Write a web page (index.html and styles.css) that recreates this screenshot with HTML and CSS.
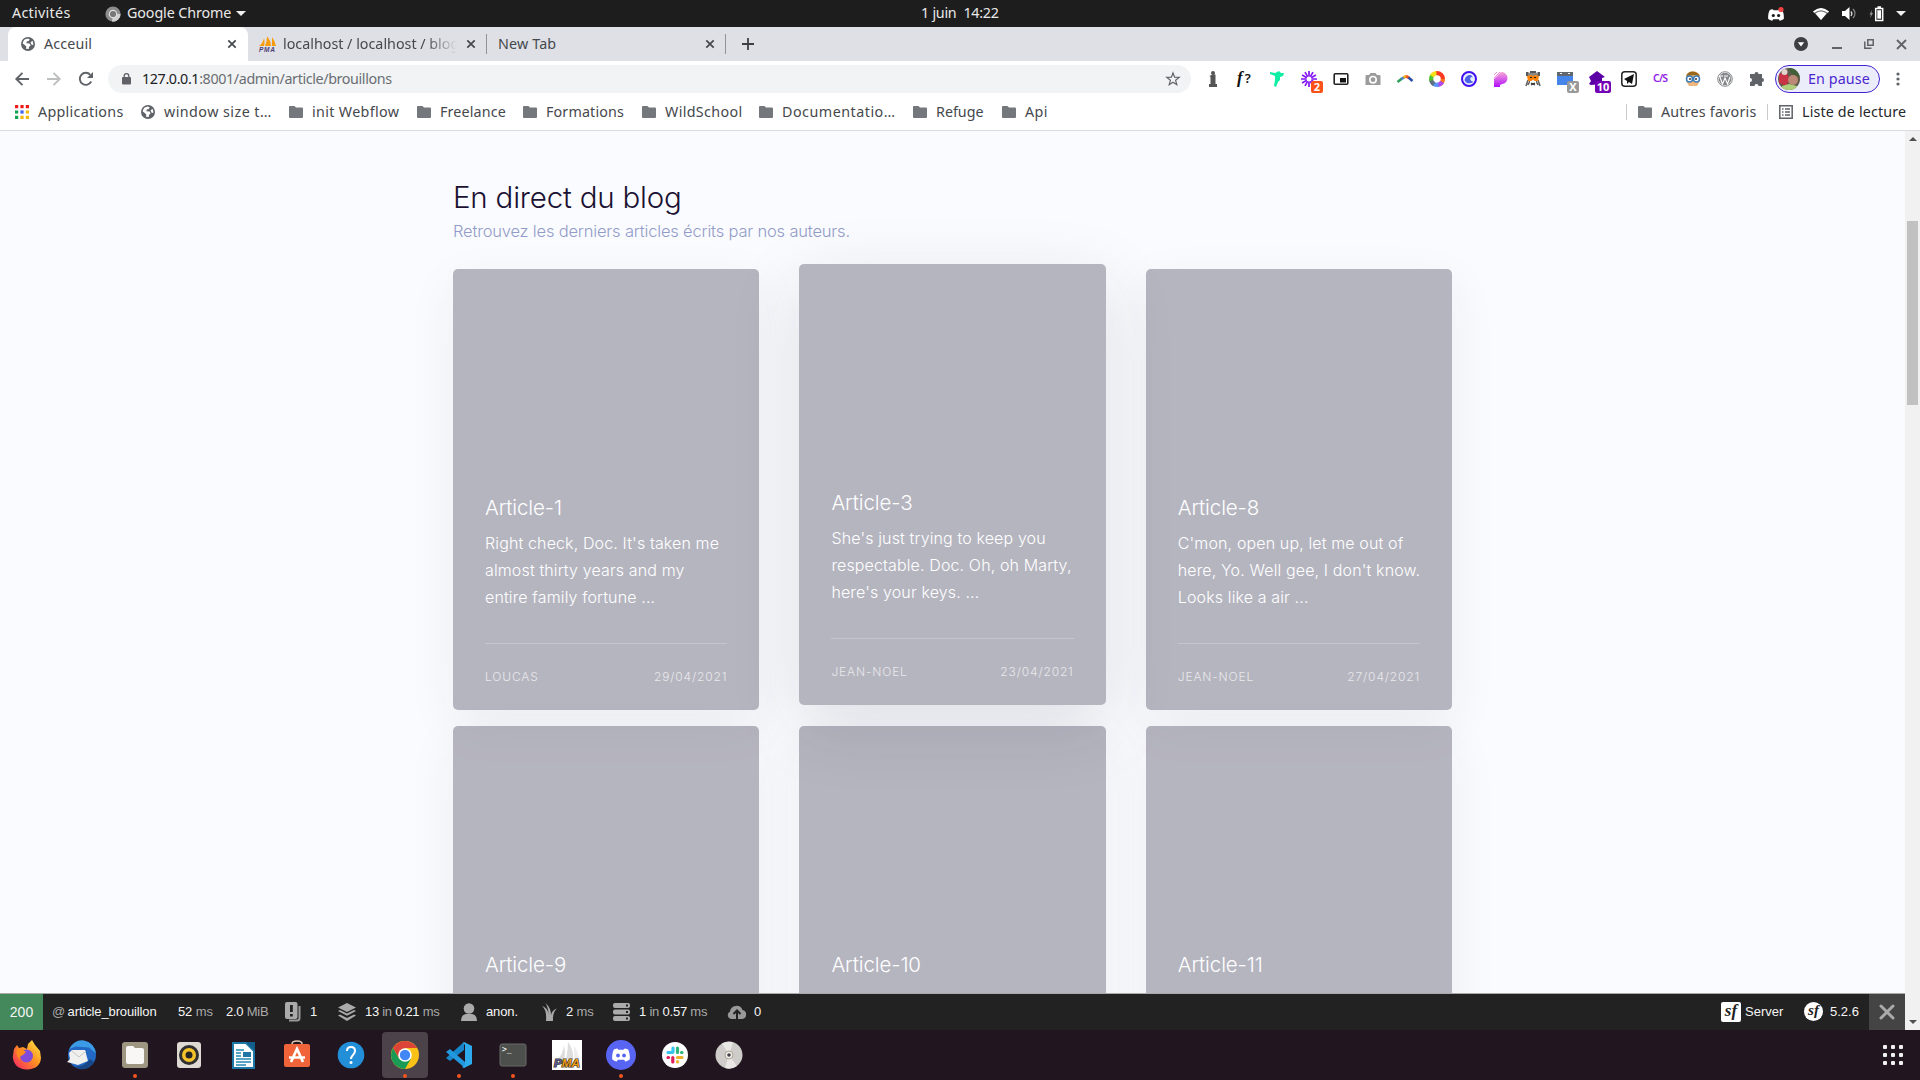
FILE: index.html
```html
<!DOCTYPE html>
<html lang="fr">
<head>
<meta charset="utf-8">
<title>Acceuil</title>
<link rel="stylesheet" href="styles.css">
</head>
<body>
<svg class="defs" aria-hidden="true">
  <symbol id="folder" viewBox="0 0 14 12"><path d="M1 0h4.500l1.500 1.500h6a1 1 0 0 1 1 1V11a1 1 0 0 1-1 1H1a1 1 0 0 1-1-1V1a1 1 0 0 1 1-1z" fill="#74787c"/></symbol>
  <symbol id="globe" viewBox="0 0 14 14"><circle cx="7" cy="7" r="7" fill="#5f6368"/><path d="M1.700 6.500C2 3.500 4 1.700 7 1.600l1.700.8-1 1.700-2 .5-.3 1.700 3.200.2 1 2-1.500 1.300-.4 2.200-2.700-.3.300-2.300-1.800-1.600z" fill="#fff"/><path d="M9.500 5.500l2-1.700 1 3.500-1.500 1z" fill="#fff"/></symbol>
  <symbol id="cross" viewBox="0 0 10 10"><path d="M1.300 1.300l7.400 7.400M8.700 1.300L1.300 8.700" stroke="#44474b" stroke-width="1.700"/></symbol>
  <symbol id="chrome" viewBox="0 0 28 28"><circle cx="14" cy="14" r="14" fill="#fbc116"/><path d="M1.900 7A14 14 0 0 1 26.100 7H14L8 17.500z" fill="#dc4437"/><path d="M1.900 7A14 14 0 0 0 14 28l6-10.500H8z" fill="#199b55"/><circle cx="14" cy="14" r="6.800" fill="#fff"/><circle cx="14" cy="14" r="5.200" fill="#4386f5"/></symbol>
  <symbol id="discord" viewBox="0 0 24 18"><path d="M8 1L6.500.3C5 .6 3.600 1 2.500 1.700 1 4.500 0 8.500.2 14.500c1.700 1.700 4 2.700 6.200 3l1.400-2.200h8.400l1.400 2.200c2.200-.3 4.500-1.300 6.200-3 .2-6-.8-10-2.300-12.800C20.400 1 19 .6 17.500.3L16 1l-.3 1H8.300z" fill="#fff"/></symbol>
  <symbol id="boat" viewBox="0 0 18 10"><path d="M0 9Q4 6 5 1q1 5 0 8zM6 9Q8 5 8-1q4 5 4 10zM13 9V0q3 4 4 9z" fill="#f89c0e"/></symbol>
</svg>

<header class="topbar">
  <span class="activities">Activités</span>
  <svg class="app-icon" viewBox="0 0 16 16"><circle cx="8" cy="8" r="7.600" fill="#8c8c8c"/><path d="M8 8h7.600A7.600 7.600 0 0 1 7 15.600z" fill="#d0d0d0"/><circle cx="8" cy="8" r="3.700" fill="#777" stroke="#ddd" stroke-width="1.200"/></svg>
  <span class="app-name">Google Chrome</span>
  <i class="caret"></i>
  <time class="clock">1 juin&nbsp; 14:22</time>
  <div class="tray">
    <svg width="18" height="16" viewBox="0 0 18 16"><use href="#discord" x="1" y="3" width="16" height="12"/><circle cx="6.300" cy="9.500" r="1.600" fill="#1d1d1d"/><circle cx="11.600" cy="9.500" r="1.600" fill="#1d1d1d"/><circle cx="14" cy="3.500" r="2.600" fill="#f04343"/></svg>
    <svg class="wifi" width="16" height="14" viewBox="0 0 16 14"><path d="M0 4.500Q8-2.500 16 4.500L8 13z" fill="#777"/><path d="M0 4.500Q8-2.500 16 4.500L14.800 5.700Q8 .7 1.200 5.700z" fill="#fff"/><path d="M2.500 6.500Q8 2.500 13.500 6.500L8 13z" fill="#fff"/></svg>
    <svg class="volume" width="16" height="14" viewBox="0 0 16 14"><path d="M0 4h3l4.500-4v13L3 9H0z" fill="#fff"/><path d="M9 4.500q1.700 2 0 4.500" stroke="#ddd" fill="none" stroke-width="1.300"/><path d="M11 2q4 4.500 0 9" stroke="#888" fill="none" stroke-width="1.300"/></svg>
    <svg class="battery" width="15" height="16" viewBox="0 0 15 16"><path d="M3 4L.5 8.500H2L1 12l3-5H2.500z" fill="#999"/><path d="M6.700 2.500h7v12h-7zM8.500 1h3.500" fill="none" stroke="#fff" stroke-width="1.500"/><path d="M8.300 4.200h3.800v8.500H8.300z" fill="#fff"/></svg>
    <i class="caret"></i>
  </div>
</header>

<nav class="tabs">
  <div class="tab active"><svg width="14" height="14"><use href="#globe"/></svg><span class="tab-title">Acceuil</span><svg class="x" width="10" height="10"><use href="#cross"/></svg></div>
  <div class="tab second"><svg width="18" height="16" viewBox="0 0 18 16"><use href="#boat" x="0" y="1" width="18" height="10"/><text x="0" y="15.500" font-family="Liberation Sans, sans-serif" font-size="6.500" font-weight="bold" font-style="italic" textLength="16" fill="#4d3f76">PMA</text></svg><span class="tab-title fade">localhost / localhost / blog</span><svg class="x" width="10" height="10"><use href="#cross"/></svg></div>
  <div class="tab third"><span class="tab-title">New Tab</span><svg class="x" width="10" height="10"><use href="#cross"/></svg></div>
  <svg class="plus" width="12" height="12" viewBox="0 0 12 12"><path d="M6 0v12M0 6h12" stroke="#3c4043" stroke-width="1.800"/></svg>
  <div class="window">
    <svg width="14" height="14" viewBox="0 0 14 14"><circle cx="7" cy="7" r="7" fill="#3c4043"/><path d="M3.800 5.300h6.400L7 9.500z" fill="#fff"/></svg>
    <svg width="10" height="10" viewBox="0 0 10 10"><path d="M0 9h10" stroke="#5f6368" stroke-width="2"/></svg>
    <svg width="10" height="10" viewBox="0 0 10 10"><path d="M3.800.8h5.400v5.400H3.800zM.8 2.500v6.700h6.700" fill="none" stroke="#5f6368" stroke-width="1.500"/></svg>
    <svg width="11" height="11" viewBox="0 0 11 11"><path d="M1 1l9 9M10 1l-9 9" stroke="#5f6368" stroke-width="1.800"/></svg>
  </div>
</nav>

<div class="toolbar">
  <div class="nav-buttons">
    <svg width="14" height="14" viewBox="0 0 14 14"><path d="M14 7H1.500M7.500.8L1.300 7l6.200 6.200" fill="none" stroke="#5f6368" stroke-width="1.900"/></svg>
    <svg width="14" height="14" viewBox="0 0 14 14"><path d="M0 7h12.500M6.500.8L12.700 7l-6.200 6.200" fill="none" stroke="#bcbec0" stroke-width="1.900"/></svg>
    <svg width="14" height="14" viewBox="0 0 14 14"><path d="M12.200 9.500A6 6 0 1 1 11.300 2.800" fill="none" stroke="#5f6368" stroke-width="1.900"/><path d="M14 0v6H8z" fill="#5f6368"/></svg>
  </div>
  <div class="omnibox">
    <svg width="9" height="12" viewBox="0 0 9 12"><rect y="4" width="9" height="7.500" rx="1" fill="#5f6368"/><path d="M2.200 4.500V3a2.300 2.300 0 0 1 4.600 0v1.500" fill="none" stroke="#5f6368" stroke-width="1.300"/></svg>
    <span class="url"><b>127.0.0.1</b>:8001/admin/article/brouillons</span>
    <svg class="star" width="14" height="14" viewBox="0 0 14 14"><path d="M7 1l1.600 4.200 4.600.2-3.600 2.900 1.200 4.400L7 10.200l-3.800 2.500 1.200-4.400L.8 5.400l4.600-.2z" fill="none" stroke="#5f6368" stroke-width="1.200"/></svg>
  </div>
  <div class="extensions">
    <svg viewBox="0 0 16 16"><circle cx="8" cy="2" r="2" fill="#555"/><path d="M4.500 5l3-1.500h3V13H12v3H4v-3h1.500V6z" fill="#555"/></svg>
    <span class="glyph fq"><i>f</i>?</span>
    <svg viewBox="0 0 16 16"><path d="M1 1l5 1 4-2 2 2 3 0-1 3-3 1v3l-2 2-2 5-2-1 1-6V5L1 3z" fill="#10eda5"/></svg>
    <svg viewBox="0 0 22 22" class="badged"><path d="M8 0v16M0 8h16M1.100 4l13.800 8M14.900 4L1.100 12M4 1.100l8 13.800M12 1.100L4 14.900" stroke="#8415f5" stroke-width="1.700"/><circle cx="8" cy="8" r="2.500" fill="#fff"/><rect x="10" y="10" width="12" height="12" rx="2" fill="#fc5217"/><text x="16" y="20" text-anchor="middle" font-family="Open Sans, sans-serif" font-weight="bold" font-size="11" fill="#fff">2</text></svg>
    <svg viewBox="0 0 16 16"><rect x="1.200" y="2.700" width="13.600" height="10.600" rx="1" fill="none" stroke="#222" stroke-width="1.600"/><path d="M7 7h6v4.500H7z" fill="#111"/></svg>
    <svg viewBox="0 0 16 16"><path d="M2 4h2l1.500-2h5L12 4h2q1.500 0 1.500 1v9H.5V5Q.5 4 2 4z" fill="#9b9b9b"/><circle cx="8" cy="8.700" r="3.200" fill="#9b9b9b" stroke="#fff" stroke-width="1.600"/></svg>
    <svg viewBox="0 0 16 16"><path d="M.5 11l4.500-3.500" stroke="#2aa05a" stroke-width="2.600"/><path d="M4 8.200l4-2.400" stroke="#4a86c8" stroke-width="2.600"/><path d="M6.500 6.500L9.500 5" stroke="#eeb41c" stroke-width="3"/><path d="M9 5l3 2" stroke="#ee5824" stroke-width="3"/><path d="M11.500 6.500l4 3.500" stroke="#2949a8" stroke-width="2.400"/></svg>
    <svg viewBox="0 0 16 16" fill="none" stroke-width="4.200"><circle cx="8" cy="8" r="5.900" stroke="#ff7614" pathLength="12" stroke-dasharray="2 10"/><circle cx="8" cy="8" r="5.900" stroke="#ae4bf2" pathLength="12" stroke-dasharray="2 10" stroke-dashoffset="-1"/><circle cx="8" cy="8" r="5.900" stroke="#5795fa" pathLength="12" stroke-dasharray="2 10" stroke-dashoffset="-2.500"/><circle cx="8" cy="8" r="5.900" stroke="#607080" pathLength="12" stroke-dasharray="2 10" stroke-dashoffset="-4"/><circle cx="8" cy="8" r="5.900" stroke="#50c430" pathLength="12" stroke-dasharray="2 10" stroke-dashoffset="-5.500"/><circle cx="8" cy="8" r="5.900" stroke="#f6df19" pathLength="12" stroke-dasharray="2 10" stroke-dashoffset="-7"/><circle cx="8" cy="8" r="5.900" stroke="#fd3b22" pathLength="12" stroke-dasharray="3.200 8.800" stroke-dashoffset="-8.800"/></svg>
    <svg viewBox="0 0 16 16"><circle cx="8" cy="8" r="7" fill="#e8f0ff" stroke="#4310f0" stroke-width="2"/><path d="M3.500 9Q5 3.500 10 4l2 2.500-2-.5Q7.500 9 12.500 11 6 14.500 3.500 9z" fill="#4d61e8"/></svg>
    <svg viewBox="0 0 16 16"><defs><linearGradient id="pk" x2="0" y2="1"><stop stop-color="#f9a8d5"/><stop offset="1" stop-color="#b00cff"/></linearGradient></defs><path d="M1 8L8 1a6 6 0 1 1 1 12l-2 1v2H1z" fill="url(#pk)"/><path d="M1 4l3-3M1 7l6-6" stroke="#f38cda"/></svg>
    <svg viewBox="0 0 16 16"><path d="M3 1l2 1h6l2-1v6H3z" fill="#888"/><path d="M2 1v4M14 1v4M5 1h6" stroke="#222" stroke-width="1.500"/><path d="M3 9l-2 6M13 9l2 6M5 10l-2 4M11 10l2 4" stroke="#666" stroke-width="1.600"/><path d="M5 8h6v7H5z" fill="#fff"/><path d="M2 5l4-1 2 1 2-1 4 1-1 5H9.500L8 8.500 6.500 10H3z" fill="#ff8208"/><path d="M5 6.500h2M9 6.500h2M6 12l4 2M10 12l-4 2" stroke="#222" stroke-width="1.200"/></svg>
    <svg viewBox="0 0 22 22" class="badged"><path d="M0 1h16v4H0z" fill="#62676d"/><path d="M0 5h16v9H0z" fill="#4584e8"/><path d="M3 2h2v1H3zM11 2h2v1h-2z" fill="#fff"/><rect x="10" y="10" width="12" height="12" rx="2" fill="#999"/><text x="16" y="20" text-anchor="middle" font-family="Open Sans, sans-serif" font-weight="bold" font-size="11" fill="#fff">X</text></svg>
    <svg viewBox="0 0 22 22" class="badged"><path d="M8 0l8 6-3 1v6l-11 1-2-1 2-3-2-4z" fill="#5a00a5"/><rect x="6" y="10" width="16" height="12" rx="2" fill="#7202b5"/><text x="14" y="20" text-anchor="middle" font-family="Open Sans, sans-serif" font-weight="bold" font-size="11" fill="#fff">10</text></svg>
    <svg viewBox="0 0 16 16"><rect x=".8" y=".8" width="14.400" height="14.400" rx="3" fill="#fff" stroke="#222" stroke-width="1.500"/><path d="M13 3l-2 10-3-2-2 2v-3L3 8z" fill="#111"/></svg>
    <span class="glyph cs">C/S</span>
    <svg viewBox="0 0 16 16"><path d="M1 6Q2 1 8 .5T15 6v4l-3 5H4l-3-5z" fill="#efb77d"/><path d="M1 5Q3 0 8 .5T15 5l-5-1z" fill="#9a681b"/><circle cx="4.500" cy="8" r="3" fill="#fff" stroke="#3c7dbb" stroke-width="1.500"/><circle cx="11.500" cy="8" r="3" fill="#fff" stroke="#3c7dbb" stroke-width="1.500"/><circle cx="5" cy="8" r="1" fill="#333"/><circle cx="11" cy="8" r="1" fill="#333"/></svg>
    <svg viewBox="0 0 16 16"><circle cx="8" cy="8" r="7.300" fill="#fff" stroke="#85888b"/><circle cx="8" cy="8" r="6.300" fill="#85888b"/><path d="M2.500 5l3 8L8 7l2.500 6 2.500-7M2 5h4M7 5h4" stroke="#fff" stroke-width="1.100" fill="none"/></svg>
    <svg viewBox="0 0 16 16"><path d="M1 3h4.500a2 2 0 1 1 4 0H13v4a2 2 0 1 1 0 4v4H9.500a2 2 0 0 0-4 0H1v-4a2 2 0 0 0 0-4z" fill="#5f6368"/></svg>
  </div>
  <div class="profile">
    <svg width="22" height="22" viewBox="0 0 22 22"><clipPath id="av"><circle cx="11" cy="11" r="11"/></clipPath><g clip-path="url(#av)"><path d="M0 0h22v22H0z" fill="#5d5b4b"/><path d="M10 0h12v9l-8-3z" fill="#426037"/><path d="M1 6l7-2 4 7-4 7-7-3z" fill="#c93346"/><circle cx="6.500" cy="4" r="3" fill="#e4d3cf"/><circle cx="15" cy="12" r="5" fill="#bc8976"/><path d="M4 18l7-2 8 2v4H4z" fill="#b0cf7d"/></g></svg>
    <span>En pause</span>
  </div>
  <svg class="kebab" width="4" height="14" viewBox="0 0 4 14" fill="#5f6368"><circle cx="2" cy="2" r="1.600"/><circle cx="2" cy="7" r="1.600"/><circle cx="2" cy="12" r="1.600"/></svg>
</div>

<div class="bookmarks">
  <div class="bm apps"><svg width="14" height="14" viewBox="0 0 13 13"><path d="M0 0h3v3H0zM5 0h3v3H5zM10 0h3v3h-3z" fill="#ed1c1c"/><path d="M0 5h3v3H0zM0 10h3v3H0z" fill="#12a352"/><path d="M5 5h3v3H5z" fill="#4464f0"/><path d="M10 5h3v3h-3zM5 10h3v3H5zM10 10h3v3h-3z" fill="#f2b90a"/></svg><span>Applications</span></div>
  <div class="bm window-size"><svg width="14" height="14"><use href="#globe"/></svg><span>window size t…</span></div>
  <div class="bm webflow"><svg width="14" height="12"><use href="#folder"/></svg><span>init Webflow</span></div>
  <div class="bm freelance"><svg width="14" height="12"><use href="#folder"/></svg><span>Freelance</span></div>
  <div class="bm formations"><svg width="14" height="12"><use href="#folder"/></svg><span>Formations</span></div>
  <div class="bm wild"><svg width="14" height="12"><use href="#folder"/></svg><span>WildSchool</span></div>
  <div class="bm docs"><svg width="14" height="12"><use href="#folder"/></svg><span>Documentatio…</span></div>
  <div class="bm refuge"><svg width="14" height="12"><use href="#folder"/></svg><span>Refuge</span></div>
  <div class="bm api"><svg width="14" height="12"><use href="#folder"/></svg><span>Api</span></div>
  <div class="bm others"><svg width="14" height="12"><use href="#folder"/></svg><span>Autres favoris</span></div>
  <div class="bm reading"><svg width="14" height="14" viewBox="0 0 14 14"><path d="M.8.8h12.400v12.400H.8z" fill="none" stroke="#5f6368" stroke-width="1.500"/><path d="M3 4h1.500M6 4h5M3 7h1.500M6 7h5M3 10h1.500M6 10h5" stroke="#5f6368" stroke-width="1.500"/></svg><span>Liste de lecture</span></div>
</div>

<div class="viewport">
  <main class="page">
    <h1>En direct du blog</h1>
    <p class="lead">Retrouvez les derniers articles écrits par nos auteurs.</p>
    <section class="cards">
      <article class="card"><h2>Article-1</h2><p>Right check, Doc. It's taken me<br>almost thirty years and my<br>entire family fortune ...</p><footer><span>LOUCAS</span><span>29/04/2021</span></footer></article>
      <article class="card raised"><h2>Article-3</h2><p>She's just trying to keep you<br>respectable. Doc. Oh, oh Marty,<br>here's your keys. ...</p><footer><span>JEAN-NOEL</span><span>23/04/2021</span></footer></article>
      <article class="card"><h2>Article-8</h2><p>C'mon, open up, let me out of<br>here, Yo. Well gee, I don't know.<br>Looks like a air ...</p><footer><span>JEAN-NOEL</span><span>27/04/2021</span></footer></article>
      <article class="card"><h2>Article-9</h2></article>
      <article class="card"><h2>Article-10</h2></article>
      <article class="card"><h2>Article-11</h2></article>
    </section>
  </main>
  <div class="scrollbar"><i class="up"></i><i class="thumb"></i><i class="down"></i></div>
  <div class="debugbar">
    <div class="status">200</div>
    <div class="d route"><em>@</em> article_brouillon</div>
    <div class="d time">52 <em>ms</em></div>
    <div class="d memory">2.0 <em>MiB</em></div>
    <div class="d logs"><svg width="16" height="20" viewBox="0 0 16 20"><path d="M4 18.500h8q2.500 0 2.500-2.500V4" fill="none" stroke="#999" stroke-width="2"/><rect width="12.500" height="17" rx="2" fill="#aaa"/><path d="M5 3h2.800v7H5zM5 12h2.800v2.500H5z" fill="#222"/></svg><span>1</span></div>
    <div class="d cache"><svg width="18" height="18" viewBox="0 0 18 18"><path d="M9 0l9 4.500L9 9 0 4.500zM0 8l2-1 7 3.500L16 7l2 1-9 4.700zM0 12.500l2-1L9 15l7-3.500 2 1L9 18z" fill="#aaa"/></svg><span>13 <em>in</em> 0.21 <em>ms</em></span></div>
    <div class="d user"><svg width="16" height="18" viewBox="0 0 16 18"><circle cx="8" cy="5.500" r="5.300" fill="#aaa"/><path d="M0 18q0-6 5-7h6q5 1 5 7z" fill="#aaa"/></svg><span>anon.</span></div>
    <div class="d twig"><svg width="15" height="18" viewBox="0 0 15 18"><path d="M4 18Q5 7 0 3q6 2 6.800 9Q6 4 3.500 0 9 5 9 12q1-5 6-6.500Q10.500 9 11 18z" fill="#aaa"/></svg><span>2 <em>ms</em></span></div>
    <div class="d db"><svg width="17" height="18" viewBox="0 0 17 18"><rect width="17" height="5" rx="2" fill="#aaa"/><rect y="6.500" width="17" height="5" rx="2" fill="#aaa"/><rect y="13" width="17" height="5" rx="2" fill="#aaa"/><path d="M13 2.500h2M13 9h2M13 15.500h2" stroke="#222" stroke-width="2"/></svg><span>1 <em>in</em> 0.57 <em>ms</em></span></div>
    <div class="d ajax"><svg width="20" height="14" viewBox="0 0 20 14"><path d="M4 14a4 4 0 0 1-1-7.500A6.500 6.500 0 0 1 15.500 5 4.600 4.600 0 0 1 15.500 14z" fill="#999"/><path d="M10 14V6M6.500 9L10 5.500 13.500 9" stroke="#222" stroke-width="2" fill="none"/></svg><span>0</span></div>
    <div class="d server"><span class="sf square">sf</span><span>Server</span></div>
    <div class="d version"><span class="sf round">sf</span><span>5.2.6</span></div>
    <div class="hide"><svg width="16" height="16" viewBox="0 0 16 16"><path d="M2 2l12 12M14 2L2 14" stroke="#aaa" stroke-width="3" stroke-linecap="round"/></svg></div>
  </div>
</div>

<footer class="dock">
  <div class="launcher"><svg viewBox="0 0 30 30"><defs><linearGradient id="ff" x1="1" x2="0" y2="1"><stop stop-color="#fff04a"/><stop offset=".45" stop-color="#ff9420"/><stop offset="1" stop-color="#f51c68"/></linearGradient></defs><path d="M2 9l3-4 2 3 4-1 4 2 1-5 4-4 3 5 5 6 1 7q-1 11-14 11.500Q2 29 .8 17z" fill="url(#ff)"/><circle cx="14.500" cy="16" r="6.500" fill="#804bd8"/><path d="M5 9q5-1 9 3l-3 3q-4 1-3 5-5-5-3-11z" fill="#ff8a1e"/></svg></div>
  <div class="launcher"><svg viewBox="0 0 30 30"><circle cx="16" cy="15" r="14" fill="#2268c4"/><path d="M3 9Q9-1 18 .5q10 2 12 13l-7-6-13-1z" fill="#3b9be6"/><path d="M3 13l3-3 13 0 3 11-10 4-11-3 3-3z" fill="#f0f0ef"/><path d="M6 11l7 6 7-6" stroke="#c5c5c5" fill="none"/><path d="M4 25q11 5 20-6l4 3q-6 9-15 7z" fill="#174788"/></svg></div>
  <div class="launcher running"><svg viewBox="0 0 30 30"><rect x="2" y="2" width="26" height="26" rx="3" fill="#9e9681"/><path d="M6 8q0-2 2-2h5l2 2h7q2 0 2 2v12q0 2-2 2H8q-2 0-2-2z" fill="#f8f7f5"/></svg></div>
  <div class="launcher"><svg viewBox="0 0 30 30"><rect x="3" y="2" width="24" height="26" rx="3" fill="#dedad3"/><circle cx="15" cy="15" r="10" fill="#303030"/><circle cx="15" cy="15" r="7" fill="#f3c329"/><circle cx="15" cy="15" r="3.500" fill="#252525"/></svg></div>
  <div class="launcher"><svg viewBox="0 0 30 30"><path d="M5 3h13l8 8v17H5z" fill="#fff" stroke="#1c78a6" stroke-width="2"/><path d="M18 2h9v9z" fill="#125f8e"/><path d="M8 10h8M8 13h5M8 16h5M8 19h15M8 22h15M8 25h10" stroke="#2586b3" stroke-width="1.400"/><path d="M15 12h8v5h-8z" fill="#2077a5"/></svg></div>
  <div class="launcher"><svg viewBox="0 0 30 30"><path d="M10 7V4q0-3 5-3t5 3v3" fill="none" stroke="#dec8b0" stroke-width="1.500"/><rect x="2" y="4" width="26" height="23" rx="2" fill="#f16439"/><path d="M9 22l6-13 6 13M7 17.500h16" fill="none" stroke="#fff" stroke-width="2.700"/></svg></div>
  <div class="launcher"><svg viewBox="0 0 30 30"><circle cx="15" cy="15" r="13.300" fill="#238fd8"/><path d="M11 11q0-4 4-4t4 4q0 2-2 4t-2 4" stroke="#fff" stroke-width="2" fill="none"/><circle cx="15" cy="22.500" r="1.500" fill="#fff"/></svg></div>
  <div class="launcher running focused"><svg viewBox="0 0 30 30"><use href="#chrome" x="1" y="1" width="28" height="28"/></svg></div>
  <div class="launcher running"><svg viewBox="0 0 30 30"><path d="M20 2v8L6 21l-4-3z" fill="#1787cc"/><path d="M2 12l4-3 15 13v6z" fill="#2298df"/><path d="M20 2l8 4v18l-8 4-2-1 3-2V5l-2-2z" fill="#2dabed"/></svg></div>
  <div class="launcher running"><svg viewBox="0 0 30 30"><rect x="2" y="4" width="26" height="22" rx="2" fill="#4d4f4c" stroke="#686a67"/><text x="4" y="12" font-family="DejaVu Sans Mono, monospace" font-size="8" fill="#fff">&gt;_</text></svg></div>
  <div class="launcher"><svg viewBox="0 0 30 30"><path d="M0 0h30v30H0z" fill="#fff"/><path d="M6 19q5-5 6-14 2 9 0 14zM14 19q2-9 2-17 6 8 5 18z" fill="#ddd"/><path d="M22 19V6q4 5 5 13z" fill="#eee"/><text x="2" y="27" textLength="26" lengthAdjust="spacingAndGlyphs" font-family="Liberation Sans, sans-serif" font-weight="bold" font-style="italic" font-size="10" paint-order="stroke" stroke="#333" stroke-width="1.200" fill="#f09b14"><tspan fill="#5c5a8c">P</tspan>MA</text></svg></div>
  <div class="launcher running"><svg viewBox="0 0 30 30"><circle cx="15" cy="15" r="15" fill="#5865f2"/><use href="#discord" x="6" y="8" width="18" height="14"/><circle cx="12" cy="15.500" r="1.900" fill="#5865f2"/><circle cx="18" cy="15.500" r="1.900" fill="#5865f2"/></svg></div>
  <div class="launcher"><svg viewBox="0 0 30 30"><circle cx="15" cy="15" r="13" fill="#fff"/><g stroke-width="3.200" stroke-linecap="round"><path d="M13 8v4M8 12.500h4.500" stroke="#36c5f0"/><path d="M17.500 8v4.500M22 12.500h-.5" stroke="#2eb67d"/><path d="M17.500 22v-.5M17.500 17.500H22" stroke="#ecb22e"/><path d="M12.800 17.500V22M8 17.500h.5" stroke="#e01e5a"/></g></svg></div>
  <div class="launcher"><svg viewBox="0 0 30 30"><circle cx="15" cy="15" r="13.500" fill="#cecdca"/><path d="M15 15L8 3.500q6-3 11-1zM15 15l8 11q-6 4-12 2z" fill="#e9e8e5"/><circle cx="15" cy="15" r="4" fill="#eee" stroke="#aaa390"/><circle cx="15" cy="15" r="1.800" fill="#444"/></svg></div>
  <svg class="show-apps" width="20" height="20" viewBox="0 0 20 20" fill="#f2f0f0"><rect width="4" height="4" rx="1"/><rect x="8" width="4" height="4" rx="1"/><rect x="16" width="4" height="4" rx="1"/><rect y="8" width="4" height="4" rx="1"/><rect x="8" y="8" width="4" height="4" rx="1"/><rect x="16" y="8" width="4" height="4" rx="1"/><rect y="16" width="4" height="4" rx="1"/><rect x="8" y="16" width="4" height="4" rx="1"/><rect x="16" y="16" width="4" height="4" rx="1"/></svg>
</footer>
</body>
</html>
```
FILE: styles.css
```css
* { box-sizing: border-box; }
body {
  margin: 0;
  width: 1920px;
  height: 1080px;
  overflow: hidden;
  display: flex;
  flex-direction: column;
  background: #fff;
  font-family: "Noto Sans", sans-serif;
  font-size: 14.3px;
  color: #45484c;
  white-space: nowrap;
}
svg { display: block; flex: none; overflow: visible; }
.defs { position: absolute; width: 0; height: 0; }

/* Desktop top bar */
.topbar {
  height: 27px;
  flex: none;
  display: flex;
  align-items: center;
  padding-left: 12px;
  background: #1d1d1d;
  color: #e9e9e9;
  line-height: 26px;
}
.topbar span, .topbar time { height: 27px; }
.activities { width: 93px; letter-spacing: .3px; }
.app-icon { width: 16px; height: 16px; }
.app-name { width: 109px; margin-left: 6px; letter-spacing: -.1px; }
.caret { border: 5px solid transparent; border-top-color: #f0f0f0; border-bottom: 0; width: 0; height: 0; }
.clock { margin-left: 675px; width: 91px; letter-spacing: -.25px; }
.tray { flex: 1; display: flex; align-items: center; padding-left: 755px; }
.wifi { margin-left: 28px; }
.volume { margin-left: 13px; }
.battery { margin-left: 11px; }
.tray .caret { margin-left: 12px; }

/* Tab strip */
.tabs {
  height: 34px;
  flex: none;
  display: flex;
  align-items: center;
  padding-left: 8px;
  background: #dee0e5;
}
.tab { height: 34px; display: flex; align-items: center; flex: none; }
.tab .x { margin-left: auto; }
.tab.active { width: 240px; padding: 0 11px 0 13px; background: #fff; border-radius: 8px 8px 0 0; }
.tab-title { margin-left: 9px; padding-bottom: 2px; letter-spacing: .15px; }
.tab.second { width: 238px; padding: 0 10px 0 11px; }
.tab.second .tab-title { width: 174px; margin-left: 6px; overflow: hidden; letter-spacing: 0; }
.fade { mask-image: linear-gradient(90deg, #000 82%, transparent); }
.tab.third { width: 240px; height: 20px; padding: 0 10px 0 2px; border: 1px solid #909398; border-width: 0 1px; }
.plus { margin-left: 16px; }
.window { margin-left: auto; display: flex; align-items: center; padding-right: 13px; gap: 22px; }
.window svg:nth-child(2) { margin-left: 2px; }

/* Address bar row */
.toolbar { height: 36px; flex: none; display: flex; align-items: center; }
.nav-buttons { width: 108px; padding-left: 15px; display: flex; gap: 18px; }
.omnibox {
  width: 1083px;
  height: 28px;
  display: flex;
  align-items: center;
  padding: 0 11px 0 14px;
  border-radius: 14px;
  background: #f1f3f4;
}
.url { margin-left: 11px; padding-bottom: 2px; color: #6a6e73; letter-spacing: -.38px; }
.url b { font-weight: 400; color: #202124; }
.star { margin-left: auto; }
.extensions { display: flex; gap: 16px; margin-left: 14px; width: 570px; height: 16px; }
.extensions svg, .glyph { width: 16px; height: 16px; }
.extensions .badged { width: 22px; height: 22px; margin-right: -6px; }
.glyph { flex: none; line-height: 14px; }
.fq { color: #111; font-size: 13px; font-weight: 600; }
.fq i { font: italic bold 17px/12px "Liberation Serif", serif; margin-right: 2px; }
.cs { color: #9023e6; font-size: 10.5px; font-weight: 600; letter-spacing: -.8px; }
.profile {
  width: 105px;
  height: 28px;
  display: flex;
  align-items: center;
  gap: 8px;
  padding-left: 2px;
  border: 1px solid #4324d0;
  border-radius: 14px;
  background: #ecedfb;
  color: #4b26cf;
}
.profile span { padding-bottom: 2px; letter-spacing: .1px; }
.kebab { margin-left: 16px; }

/* Bookmarks */
.bookmarks {
  height: 34px;
  flex: none;
  display: flex;
  align-items: flex-start;
  padding-left: 15px;
  border-bottom: 1px solid #d9dbe2;
}
.bm { display: flex; align-items: center; gap: 9px; height: 29px; flex: none; }
.apps { width: 126px; letter-spacing: .28px; }
.window-size { width: 148px; letter-spacing: .45px; }
.webflow { width: 128px; letter-spacing: .35px; }
.freelance { width: 106px; letter-spacing: .15px; }
.formations { width: 119px; letter-spacing: .15px; }
.wild { width: 117px; letter-spacing: .35px; }
.docs { width: 154px; letter-spacing: .5px; }
.refuge { width: 89px; }
.api { width: 60px; letter-spacing: .4px; }
.others, .reading { position: relative; }
.others { margin-left: auto; width: 141px; letter-spacing: .2px; }
.reading { width: 141px; color: #26282b; letter-spacing: .15px; }
.others::before, .reading::before { content: ""; position: absolute; left: -12px; top: 7px; width: 1px; height: 16px; background: #c8cacd; }

/* Blog page */
.viewport {
  height: 899px;
  flex: none;
  display: grid;
  grid-template-columns: 1905px 15px;
  grid-template-rows: 862px 37px;
  background: #fafbfe;
}
.page {
  grid-area: 1 / 1;
  overflow: hidden;
  padding: 43px 453px 0;
  font-family: Inter, sans-serif;
  font-weight: 300;
}
.page h1, .page h2, .page p { margin: 0; font-weight: 300; }
.page h1 { font-size: 29.5px; line-height: 47px; color: #1b1233; letter-spacing: -.2px; }
.page .lead { font-size: 16.5px; line-height: 20px; color: #929bc8; letter-spacing: -.18px; }
.cards {
  display: grid;
  grid-template-columns: repeat(3, 306.300px);
  grid-auto-rows: 441px;
  gap: 16px 40.100px;
  margin-top: 28px;
}
.card {
  padding: 224px 32px 0;
  border-radius: 5px;
  background: rgba(36, 34, 60, .32);
  box-shadow: 0 15px 50px rgba(31, 40, 61, .065);
  color: #fff;
}
.card.raised { transform: translateY(-5px); box-shadow: 0 20px 70px rgba(31, 35, 61, .13); }
.card h2 { font-size: 20.500px; line-height: 30px; letter-spacing: -.1px; }
.card p { margin-top: 7px; font-size: 16px; line-height: 27px; letter-spacing: .13px; }
.card footer {
  display: flex;
  justify-content: space-between;
  margin-top: 32px;
  padding-top: 24px;
  border-top: 1px solid #c5c5cc;
  font-size: 12px;
  line-height: 18px;
  letter-spacing: .85px;
  color: #e8e8eb;
}

.scrollbar {
  grid-area: 1 / 2 / 3 / 3;
  display: flex;
  flex-direction: column;
  align-items: center;
  background: #f1f1f1;
}
.up { margin-top: 6px; border: 4px solid transparent; border-top: 0; border-bottom-color: #505050; }
.thumb { margin-top: 80px; width: 11px; height: 184px; background: #c1c1c1; }
.down { margin: auto 0 6px; border: 4px solid transparent; border-bottom: 0; border-top-color: #505050; }

/* Profiler bar */
.debugbar {
  grid-area: 2 / 1;
  display: flex;
  align-items: center;
  border-top: 1px solid #aaa;
  background: #222;
  color: #f5f5f5;
  font: 13px "Liberation Sans", Arial, sans-serif;
}
.debugbar em { font-style: normal; color: #aaa; }
.status { width: 43px; height: 36px; line-height: 36px; text-align: center; font-size: 14px; background: #43895c; }
.d { display: flex; align-items: center; gap: 9px; flex: none; white-space: pre; height: 34px; margin-bottom: 2px; letter-spacing: -.12px; }
.d svg, .d .sf { margin-top: 1px; }
.route { margin-left: 9px; width: 126px; gap: 0; }
.route em { margin-right: -1px; }
.time { width: 48px; gap: 0; }
.memory { width: 59px; gap: 0; letter-spacing: -.25px; }
.logs { width: 53px; }
.cache { width: 123px; letter-spacing: -.28px; }
.user { width: 81px; }
.twig { width: 71px; }
.db { width: 114px; letter-spacing: -.22px; }
.ajax { width: 60px; gap: 7px; }
.server { margin-left: auto; width: 83px; gap: 4px; letter-spacing: 0; }
.version { width: 65px; gap: 7px; letter-spacing: 0; }
.sf { width: 20px; height: 20px; background: #fff; color: #222; text-align: center; font: italic bold 17px/17px "Liberation Serif", serif; }
.square { border-radius: 2px; }
.round { width: 19px; height: 19px; border-radius: 50%; font-size: 15px; }
.hide { width: 36px; height: 36px; display: grid; place-items: center; background: #444; }

/* Dock */
.dock { height: 50px; flex: none; display: flex; background: #21151f; }
.launcher { position: relative; width: 54px; display: grid; place-items: center; }
.launcher svg { width: 30px; height: 30px; position: relative; }
.running::after { content: ""; position: absolute; left: 25px; top: 44px; width: 4px; height: 4px; border-radius: 50%; background: #f1541f; }
.focused::before { content: ""; position: absolute; left: 4px; top: 2px; width: 46px; height: 46px; border-radius: 4px; background: #4c424a; }
.show-apps { margin: 15px 17px 0 auto; }
```
